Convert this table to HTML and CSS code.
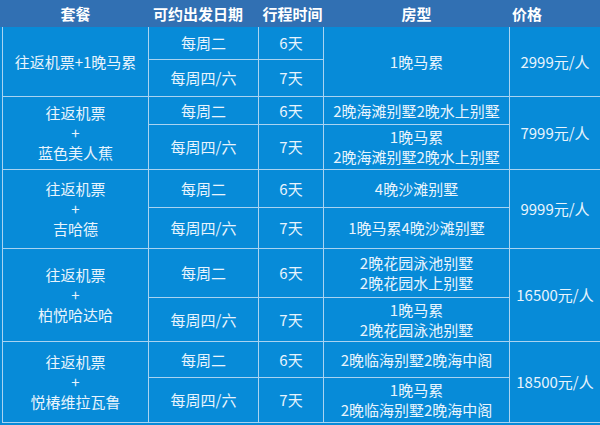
FILE: index.html
```html
<!DOCTYPE html>
<html lang="zh-CN">
<head>
<meta charset="utf-8">
<title>套餐价格</title>
<link rel="stylesheet" href="styles.css">
</head>
<body>
<div class="page">
  <div class="head">
    <div class="hc">套餐</div>
    <div class="hc h-date">可约出发日期</div>
    <div class="hc h-days">行程时间</div>
    <div class="hc">房型</div>
    <div class="hc h-price">价格</div>
  </div>
  <div class="grid">
    <!-- group 1 -->
    <div class="c r2">往返机票+1晚马累</div>
    <div class="c">每周二</div>
    <div class="c">6天</div>
    <div class="c r2">1晚马累</div>
    <div class="c r2">2999元/人</div>
    <div class="c">每周四/六</div>
    <div class="c">7天</div>

    <!-- group 2 -->
    <div class="c r2">往返机票<br>+<br>蓝色美人蕉</div>
    <div class="c">每周二</div>
    <div class="c">6天</div>
    <div class="c">2晚海滩别墅2晚水上别墅</div>
    <div class="c r2">7999元/人</div>
    <div class="c">每周四/六</div>
    <div class="c">7天</div>
    <div class="c">1晚马累<br>2晚海滩别墅2晚水上别墅</div>

    <!-- group 3 -->
    <div class="c r2">往返机票<br>+<br>吉哈德</div>
    <div class="c">每周二</div>
    <div class="c">6天</div>
    <div class="c">4晚沙滩别墅</div>
    <div class="c r2">9999元/人</div>
    <div class="c">每周四/六</div>
    <div class="c">7天</div>
    <div class="c">1晚马累4晚沙滩别墅</div>

    <!-- group 4 -->
    <div class="c r2">往返机票<br>+<br>柏悦哈达哈</div>
    <div class="c">每周二</div>
    <div class="c">6天</div>
    <div class="c">2晚花园泳池别墅<br>2晚花园水上别墅</div>
    <div class="c r2">16500元/人</div>
    <div class="c">每周四/六</div>
    <div class="c">7天</div>
    <div class="c">1晚马累<br>2晚花园泳池别墅</div>

    <!-- group 5 -->
    <div class="c r2">往返机票<br>+<br>悦椿维拉瓦鲁</div>
    <div class="c">每周二</div>
    <div class="c">6天</div>
    <div class="c">2晚临海别墅2晚海中阁</div>
    <div class="c r2">18500元/人</div>
    <div class="c">每周四/六</div>
    <div class="c">7天</div>
    <div class="c">1晚马累<br>2晚临海别墅2晚海中阁</div>
  </div>
</div>
</body>
</html>
```
FILE: styles.css
```css
html, body {
  margin: 0;
  padding: 0;
  background: #078bd8;
}
body {
  width: 600px;
  height: 425px;
  overflow: hidden;
  font-family: "Noto Sans CJK SC", "Noto Sans", sans-serif;
}
.page {
  display: flex;
  flex-direction: column;
}
.head {
  display: grid;
  grid-template-columns: 145px 109px 64px 185px 1fr;
  column-gap: 1px;
  height: 27px;
  padding-left: 3px;
  background: #3170b3;
  color: #ffffff;
  font-weight: bold;
  font-size: 15px;
}
.hc {
  display: flex;
  align-items: center;
  justify-content: center;
  line-height: 20px;
}
.h-date { padding-right: 11px; }
.h-days { padding-left: 3px; }
.h-price { justify-content: flex-start; padding-left: 2px; }

.grid {
  margin-left: 2px;
  display: grid;
  grid-template-columns: 145px 109px 64px 185px 1fr;
  grid-template-rows: 32px 36px 27px 44px 37px 40px 48px 43px 35px 44px;
  gap: 1px;
  padding-left: 1px;
  padding-bottom: 1px;
  background: #a9d3f1;
  color: #e8f4fd;
  font-size: 15px;
  line-height: 20px;
}
.c {
  background: #078bd8;
  display: flex;
  align-items: center;
  justify-content: center;
  text-align: center;
}
.r2 { grid-row: span 2; }
```
